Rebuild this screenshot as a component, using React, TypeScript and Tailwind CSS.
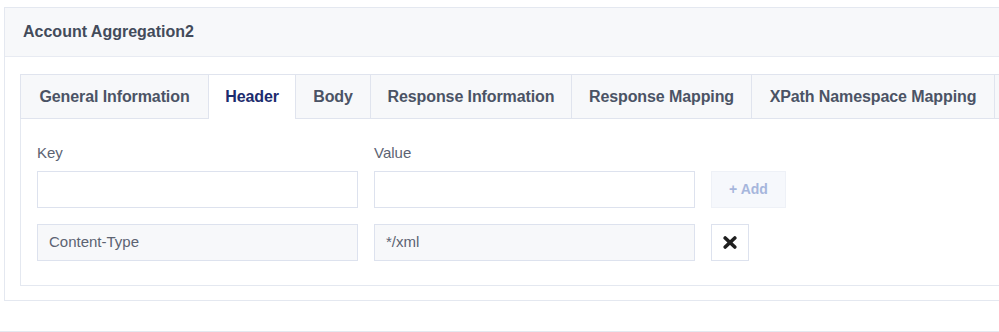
import React from "react";

const tabs: { label: string; w: string }[] = [
  { label: "General Information", w: "w-[188px]" },
  { label: "Header", w: "w-[87px]" },
  { label: "Body", w: "w-[75px]" },
  { label: "Response Information", w: "w-[201px]" },
  { label: "Response Mapping", w: "w-[180px]" },
  { label: "XPath Namespace Mapping", w: "w-[243px]" },
];

function CrossIcon() {
  return (
    <svg width="14" height="13" viewBox="0 0 14 13" aria-hidden="true">
      <path
        d="M2.2 2 L11.8 11 M11.8 2 L2.2 11"
        stroke="#1f1f1f"
        strokeWidth="3.6"
        strokeLinecap="round"
        fill="none"
      />
    </svg>
  );
}

export default function App() {
  return (
    <div
      className="w-[999px] h-[332px] overflow-hidden bg-white pt-[7px] pl-[4px]"
      style={{ fontFamily: '"Liberation Sans", Arial, sans-serif' }}
    >
      <div className="w-[1100px] border-t border-l border-b border-[#e4e8f0] bg-white">
        <div className="h-[49px] bg-[#f7f8fa] border-b border-[#e8ebf2] flex items-center pl-[18px]">
          <span className="text-[16px] font-bold text-[#434b5a]">Account Aggregation2</span>
        </div>
        <div className="pt-[17px] pl-[15px] pb-[14px]">
          <div className="w-[1200px]">
            <div className="flex border-t border-l border-[#e0e4ee]">
              {tabs.map((t) => {
                const active = t.label === "Header";
                return (
                  <div
                    key={t.label}
                    className={
                      active
                        ? `${t.w} h-[44px] flex items-center justify-center border-r border-[#e0e4ee] bg-white text-[#1c2b6e] text-[16px] font-bold whitespace-nowrap tracking-[-0.1px]`
                        : `${t.w} h-[44px] flex items-center justify-center border-r border-b border-[#e0e4ee] bg-[#f7f8fa] text-[#4b5365] text-[16px] font-bold whitespace-nowrap tracking-[-0.1px]`
                    }
                  >
                    {t.label}
                  </div>
                );
              })}
              <div className="w-[120px] h-[44px] border-r border-b border-[#e0e4ee] bg-[#f7f8fa]" />
              <div className="flex-1 border-b border-[#e0e4ee]" />
            </div>
            <div className="border-l border-b border-[#e4e8f0] pl-[16px] pt-[25px] pb-[24px]">
              <div className="grid grid-cols-[321px_321px] gap-x-[16px]">
                <div className="text-[15px] leading-[18px] text-[#5c6372] mb-[9px]">Key</div>
                <div className="text-[15px] leading-[18px] text-[#5c6372] mb-[9px]">Value</div>
              </div>
              <div className="flex gap-[16px]">
                <div className="w-[321px] h-[37px] border border-[#dde2ee] bg-white" />
                <div className="w-[321px] h-[37px] border border-[#dde2ee] bg-white" />
                <div className="w-[75px] h-[37px] border border-[#eef1f7] bg-[#f6f8fc] flex items-center justify-center text-[14px] font-bold text-[#a6b6dc]">
                  + Add
                </div>
              </div>
              <div className="flex gap-[16px] mt-[16px]">
                <div className="w-[321px] h-[37px] border border-[#dde2ee] bg-[#f7f8fa] flex items-center pl-[11px] text-[15px] text-[#5c6372]">
                  Content-Type
                </div>
                <div className="w-[321px] h-[37px] border border-[#dde2ee] bg-[#f7f8fa] flex items-center pl-[11px] text-[15px] text-[#5c6372]">
                  */xml
                </div>
                <div className="w-[38px] h-[37px] border border-[#dde2ee] bg-white flex items-center justify-center">
                  <CrossIcon />
                </div>
              </div>
            </div>
          </div>
        </div>
      </div>
      <div className="-ml-[4px] mt-[30px] w-[999px] border-t border-[#e4e8f0]" />
    </div>
  );
}
